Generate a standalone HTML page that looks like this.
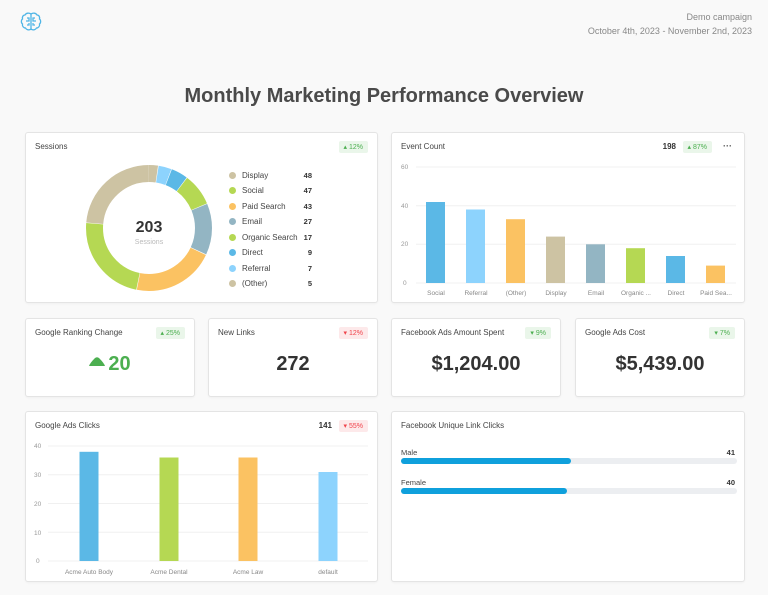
<!DOCTYPE html>
<html><head><meta charset="utf-8"><style>
*{margin:0;padding:0;box-sizing:border-box}
body{width:768px;height:595px;background:#f9f9f9;font-family:"Liberation Sans",Arial,sans-serif;color:#333;position:relative;overflow:hidden}
.a{position:absolute}
.card{position:absolute;background:#fff;border:1px solid #e4e4e4;border-radius:3px;box-shadow:0 1px 2px rgba(0,0,0,.04)}
.t{position:absolute;left:9px;top:9px;font-size:8px;color:#444}
.bd{position:absolute;top:8px;font-size:7px;padding:2px 5px;border-radius:2px}
.up{background:#eaf6ea;color:#4caf50}
.dn{background:#fde9ea;color:#f0434b}
.dng{background:#eaf6ea;color:#4caf50}
.big{position:absolute;left:0;right:0;top:34px;text-align:center;font-size:20px;font-weight:bold;color:#333}
.leg{position:absolute;font-size:8px;color:#444}
.leg i{position:absolute;left:0;top:1px;width:7px;height:7px;border-radius:50%}
.leg span{position:absolute;left:13px;white-space:nowrap}
.leg b{position:absolute;left:66px;width:17px;text-align:right;font-size:7.5px;color:#333}
svg text{font-family:"Liberation Sans",Arial,sans-serif}
</style></head><body>
<svg class="a" style="left:20px;top:11px" width="22" height="22" viewBox="0 0 22 22" fill="none" stroke="#4fb5e6" stroke-width="1.3"><path d="M11 3c-2-1.5-5-1-6 1-2 0-3 2-2.5 4-1.5 1-1.5 4 0 5 -.5 2 1 4 3 4 1 2 4 2.5 5.5 1 1.5 1.5 4.5 1 5.5-1 2 0 3.5-2 3-4 1.5-1 1.5-4 0-5 .5-2-.5-4-2.5-4-1-2-4-2.5-6-1z"/><path d="M11 3v16M7 7h2v3H6M15 7h-2v3h3M7 14h2v-2M15 14h-2v-2"/></svg>
<div class="a" style="right:16px;top:10px;font-size:9px;color:#888;text-align:right;line-height:14px">Demo campaign<br>October 4th, 2023 - November 2nd, 2023</div>
<div class="a" style="left:0;width:768px;top:85px;text-align:center;font-size:20px;font-weight:bold;color:#4a4a4a">Monthly Marketing Performance Overview</div>

<div class="card" style="left:25px;top:132px;width:353px;height:171px">
<div class="t">Sessions</div><div class="bd up" style="right:9px">▴ 12%</div>
<svg class="a" style="left:58px;top:30px" width="130" height="130" viewBox="0 0 130 130">
<g transform="rotate(-90 65 65)" fill="none" stroke-width="17">
<circle cx="65" cy="65" r="54.5" stroke="#cdc3a3" stroke-dasharray="7.9 400" stroke-dashoffset="0"/>
<circle cx="65" cy="65" r="54.5" stroke="#8dd3fd" stroke-dasharray="11.3 400" stroke-dashoffset="-8.43"/>
<circle cx="65" cy="65" r="54.5" stroke="#5bb8e6" stroke-dasharray="14.7 400" stroke-dashoffset="-20.24"/>
<circle cx="65" cy="65" r="54.5" stroke="#b5d853" stroke-dasharray="28.2 400" stroke-dashoffset="-35.42"/>
<circle cx="65" cy="65" r="54.5" stroke="#93b5c3" stroke-dasharray="45 400" stroke-dashoffset="-64.1"/>
<circle cx="65" cy="65" r="54.5" stroke="#fbc262" stroke-dasharray="72 400" stroke-dashoffset="-109.64"/>
<circle cx="65" cy="65" r="54.5" stroke="#b5d853" stroke-dasharray="78.8 400" stroke-dashoffset="-182.17"/>
<circle cx="65" cy="65" r="54.5" stroke="#cdc3a3" stroke-dasharray="80.5 400" stroke-dashoffset="-261.45"/>
</g>
<text x="65" y="69" text-anchor="middle" font-size="16" font-weight="bold" fill="#333">203</text>
<text x="65" y="81" text-anchor="middle" font-size="7" fill="#bbb">Sessions</text>
</svg>
<div class="leg" style="top:38px;left:203px"><i style="background:#cdc3a3"></i><span>Display</span><b>48</b></div>
<div class="leg" style="top:53px;left:203px"><i style="background:#b5d853"></i><span>Social</span><b>47</b></div>
<div class="leg" style="top:69px;left:203px"><i style="background:#fbc262"></i><span>Paid Search</span><b>43</b></div>
<div class="leg" style="top:84px;left:203px"><i style="background:#93b5c3"></i><span>Email</span><b>27</b></div>
<div class="leg" style="top:100px;left:203px"><i style="background:#b5d853"></i><span>Organic Search</span><b>17</b></div>
<div class="leg" style="top:115px;left:203px"><i style="background:#5bb8e6"></i><span>Direct</span><b>9</b></div>
<div class="leg" style="top:131px;left:203px"><i style="background:#8dd3fd"></i><span>Referral</span><b>7</b></div>
<div class="leg" style="top:146px;left:203px"><i style="background:#cdc3a3"></i><span>(Other)</span><b>5</b></div>
</div>

<div class="card" style="left:391px;top:132px;width:354px;height:171px">
<div class="t">Event Count</div>
<div class="a" style="right:68px;top:9px;font-size:8px;font-weight:bold">198</div>
<div class="bd up" style="right:32px">▴ 87%</div>
<div class="a" style="right:12px;top:8px;font-size:9px;font-weight:bold;color:#555">···</div>
</div>
<svg class="a" style="left:391px;top:132px" width="354" height="171">
<g stroke="#f0f0f0" stroke-width="1"><line x1="25" x2="345" y1="35" y2="35"/><line x1="25" x2="345" y1="73.7" y2="73.7"/><line x1="25" x2="345" y1="112.3" y2="112.3"/><line x1="25" x2="345" y1="151" y2="151"/></g>
<g font-size="6.5" fill="#999"><text x="10" y="37">60</text><text x="10" y="76">40</text><text x="10" y="114">20</text><text x="12" y="153">0</text></g>
<rect x="35" y="70" width="19" height="81" fill="#5bb8e6"/>
<rect x="75" y="77.5" width="19" height="73.5" fill="#8dd3fd"/>
<rect x="115" y="87.2" width="19" height="63.8" fill="#fbc262"/>
<rect x="155" y="104.6" width="19" height="46.4" fill="#cdc3a3"/>
<rect x="195" y="112.3" width="19" height="38.7" fill="#93b5c3"/>
<rect x="235" y="116.2" width="19" height="34.8" fill="#b5d853"/>
<rect x="275" y="124" width="19" height="27" fill="#5bb8e6"/>
<rect x="315" y="133.6" width="19" height="17.4" fill="#fbc262"/>
<g font-size="6.5" fill="#888" text-anchor="middle"><text x="45" y="163">Social</text><text x="85" y="163">Referral</text><text x="125" y="163">(Other)</text><text x="165" y="163">Display</text><text x="205" y="163">Email</text><text x="245" y="163">Organic ...</text><text x="285" y="163">Direct</text><text x="325" y="163">Paid Sea...</text></g>
</svg>

<div class="card" style="left:25px;top:318px;width:170px;height:79px">
<div class="t">Google Ranking Change</div><div class="bd up" style="right:9px">▴ 25%</div>
<div class="big" style="color:#4caf50"><svg width="16" height="9" viewBox="0 0 16 9" style="margin-right:3px;vertical-align:4px"><path d="M0 9 Q1 6 6 1 Q8 -0.5 10 1 Q15 6 16 9Z" fill="#4caf50"/></svg>20</div></div>
<div class="card" style="left:208px;top:318px;width:170px;height:79px">
<div class="t">New Links</div><div class="bd dn" style="right:9px">▾ 12%</div><div class="big">272</div></div>
<div class="card" style="left:391px;top:318px;width:170px;height:79px">
<div class="t">Facebook Ads Amount Spent</div><div class="bd dng" style="right:9px">▾ 9%</div><div class="big">$1,204.00</div></div>
<div class="card" style="left:575px;top:318px;width:170px;height:79px">
<div class="t">Google Ads Cost</div><div class="bd dng" style="right:9px">▾ 7%</div><div class="big">$5,439.00</div></div>

<div class="card" style="left:25px;top:411px;width:353px;height:171px">
<div class="t">Google Ads Clicks</div>
<div class="a" style="right:45px;top:9px;font-size:8px;font-weight:bold">141</div>
<div class="bd dn" style="right:9px">▾ 55%</div>
</div>
<svg class="a" style="left:25px;top:411px" width="353" height="171">
<g stroke="#f0f0f0"><line x1="23" x2="343" y1="35" y2="35"/><line x1="23" x2="343" y1="63.7" y2="63.7"/><line x1="23" x2="343" y1="92.5" y2="92.5"/><line x1="23" x2="343" y1="121.2" y2="121.2"/><line x1="23" x2="343" y1="150" y2="150"/></g>
<g font-size="6.5" fill="#999"><text x="9" y="37">40</text><text x="9" y="66">30</text><text x="9" y="95">20</text><text x="9" y="124">10</text><text x="11" y="152">0</text></g>
<rect x="54.5" y="40.8" width="19" height="109.2" fill="#5bb8e6"/>
<rect x="134.5" y="46.5" width="19" height="103.5" fill="#b5d853"/>
<rect x="213.5" y="46.5" width="19" height="103.5" fill="#fbc262"/>
<rect x="293.5" y="61" width="19" height="89" fill="#8dd3fd"/>
<g font-size="6.5" fill="#888" text-anchor="middle"><text x="64" y="163">Acme Auto Body</text><text x="144" y="163">Acme Dental</text><text x="223" y="163">Acme Law</text><text x="303" y="163">default</text></g>
</svg>

<div class="card" style="left:391px;top:411px;width:354px;height:171px">
<div class="t">Facebook Unique Link Clicks</div>
<div class="a" style="left:9px;top:36px;font-size:7.5px;color:#444">Male</div>
<div class="a" style="right:9px;top:36px;font-size:7.5px;font-weight:bold">41</div>
<div class="a" style="left:9px;top:46px;width:336px;height:6px;background:#eceef1;border-radius:3px"><div style="width:170px;height:6px;background:#0fa0dc;border-radius:3px"></div></div>
<div class="a" style="left:9px;top:66px;font-size:7.5px;color:#444">Female</div>
<div class="a" style="right:9px;top:66px;font-size:7.5px;font-weight:bold">40</div>
<div class="a" style="left:9px;top:76px;width:336px;height:6px;background:#eceef1;border-radius:3px"><div style="width:166px;height:6px;background:#0fa0dc;border-radius:3px"></div></div>
</div>
</body></html>
